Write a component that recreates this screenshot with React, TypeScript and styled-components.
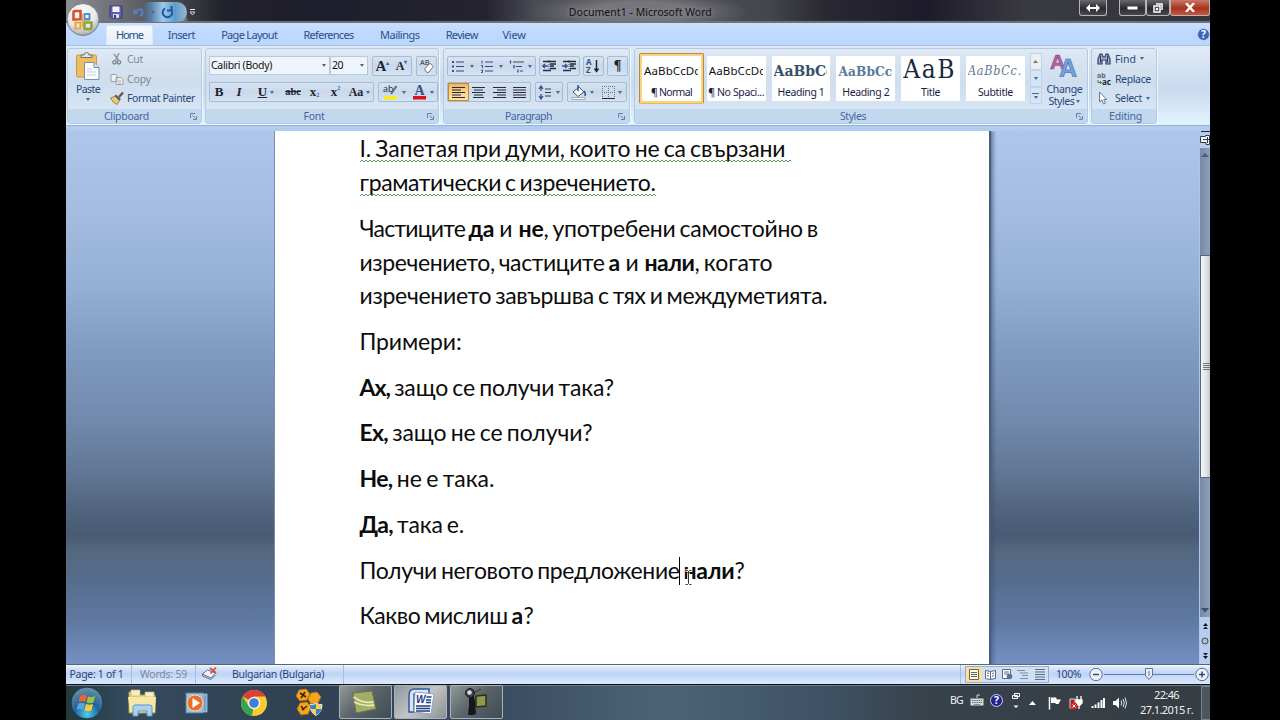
import React, { useLayoutEffect, useRef } from 'react';
import styled, { createGlobalStyle, css } from 'styled-components';

const GlobalStyle = createGlobalStyle`
  * {
    box-sizing: border-box;
  }
  body {
    margin: 0;
    background: #000;
    overflow: hidden;
  }
  svg {
    display: block;
    flex: none;
  }
`;

const uiFont = '"Noto Sans", "Open Sans", sans-serif';
const docFont = 'Lato, "Open Sans", sans-serif';
const serifFont = '"Liberation Serif", serif';
const headFont = '"DejaVu Serif Condensed", "DejaVu Serif", serif';

/* Text that is tracked so that it fills exactly the given width. */
const FitSpan = styled.span<{ bold?: boolean }>`
  display: inline-block;
  white-space: pre;
  ${(p) => p.bold && 'font-weight: bold;'}
`;

type FitProps = { w: number; bold?: boolean; children: React.ReactNode };

const Fit = ({ w, bold, children }: FitProps) => {
  const ref = useRef<HTMLSpanElement>(null);

  useLayoutEffect(() => {
    const el = ref.current;
    if (!el) return;
    el.style.letterSpacing = '0px';
    const natural = el.getBoundingClientRect().width;
    const count = (el.textContent || '').length;
    el.style.letterSpacing = `${(w - natural) / count}px`;
  }, [w]);

  return (
    <FitSpan ref={ref} bold={bold}>
      {children}
    </FitSpan>
  );
};

const Screen = styled.div`
  width: 1280px;
  height: 720px;
  padding: 0 70px 0 66px;
  background: #000;
  overflow: hidden;
`;

const Desktop = styled.div`
  display: flex;
  flex-direction: column;
  width: 1144px;
  height: 720px;
  font-family: ${uiFont};
  font-size: 10.5px;
  color: #26477f;
`;

/* ---------- title bar ---------- */

const TitleBar = styled.div`
  position: relative;
  display: flex;
  flex: none;
  height: 23px;
  background:
    radial-gradient(ellipse 20px 12px at 103px 20px, #e4e4e4 0 45%, transparent 100%),
    radial-gradient(ellipse 110px 22px at 574px 12px, #75757b 0 45%, transparent 100%),
    linear-gradient(90deg, #8d8f93 0, #6a6c72 55px, #45474e 110px, #22222b 155px, #1e1d2b 240px, #24232f 420px, #4b4c54 470px, #45464e 700px, #292831 760px, #1d1b29 860px, #3a3a42 960px, #33333d 1144px);
  box-shadow: inset 0 -2px 1px #70747a;
`;

const OfficeButton = styled.div`
  position: absolute;
  left: 0;
  top: 2px;
  z-index: 2;
`;

const QuickAccess = styled.div`
  display: flex;
  align-items: center;
  width: 134px;
  height: 23px;
  padding: 1px 0 0 43px;
`;

const UndoPill = styled.div`
  display: flex;
  align-items: center;
  gap: 6px;
  width: 58px;
  height: 20px;
  margin-left: 6px;
  padding-left: 4px;
  border-radius: 4px 10px 10px 4px;
  background: linear-gradient(90deg, transparent 14px, #587fa8 22px, #9cc9e8 34px, #5b9dca 46px, #9db8cc);
`;

const DocTitle = styled.div`
  width: 880px;
  padding-left: 369px;
  line-height: 25px;
  color: #101014;
  text-shadow: 0 0 4px #999;
`;

const WindowButtons = styled.div`
  display: flex;
  height: 17px;
`;

const WinButton = styled.div<{ w: number; red?: boolean; gap?: number }>`
  display: flex;
  flex: none;
  align-items: center;
  justify-content: center;
  width: ${(p) => p.w}px;
  height: 16px;
  margin-left: ${(p) => p.gap || 0}px;
  border: 1px solid #b5b5b8;
  border-top: 0;
  border-radius: 0 0 3px 3px;
  background: ${(p) =>
    p.red
      ? 'linear-gradient(#c9786b, #a6331f 55%, #c9563c)'
      : 'linear-gradient(#66676c, #2b2b31 55%, #47474d)'};
`;

/* ---------- ribbon ---------- */

const TabRow = styled.div`
  display: flex;
  flex: none;
  height: 22px;
  padding-left: 40px;
  background: linear-gradient(#c9dfff, #bfd9ff 40%, #bcd6fd);
`;

const Tab = styled.div<{ w: number; active?: boolean }>`
  width: ${(p) => p.w}px;
  height: 23px;
  margin-top: 2px;
  line-height: 20px;
  text-align: center;
  font-size: 11px;
  color: #2a4f87;
  ${(p) =>
    p.active &&
    css`
      border: 1px solid #d9e9fb;
      border-bottom: 0;
      border-radius: 3px 3px 0 0;
      line-height: 18px;
      background: linear-gradient(#f4f9ff, #e1edf9);
    `}
`;

const HelpSlot = styled.div`
  margin: 5px 0 0 661px;
`;

const Ribbon = styled.div`
  display: flex;
  flex: none;
  height: 81px;
  padding: 2px 0 0 1px;
  border-top: 1px solid #a5c4ea;
  border-bottom: 1px solid #8fb2d6;
  background: linear-gradient(#e1ebf6, #d3e1f1 30%, #c9daee 55%, #dbebfa 85%, #dff5fc);
`;

const RibbonFoot = styled.div`
  flex: none;
  height: 5px;
  background: #b2cbee;
`;

const Group = styled.div<{ w: number; gap?: number }>`
  display: flex;
  flex-direction: column;
  flex: none;
  width: ${(p) => p.w}px;
  height: 76px;
  margin-right: ${(p) => p.gap || 3}px;
  border: 1px solid #b3cae3;
  border-radius: 3px;
  background: linear-gradient(#e0e9f4, #d5e2f0 22%, #cfdeee 45%, #dae8f6);
  box-shadow: 1px 1px 0 #f0f7fd;
`;

const GroupBody = styled.div`
  display: flex;
  height: 60px;
`;

const GroupLabel = styled.div<{ plain?: boolean }>`
  display: flex;
  align-items: center;
  height: 14px;
  padding: ${(p) => (p.plain ? '0' : '0 4px 0 0')};
  background: #c2d8ef;
  color: #4565a0;

  > span {
    flex: 1;
    padding: ${(p) => (p.plain ? '0 0 0 3px' : '0 5px 0 0')};
    text-align: center;
  }
`;

const PasteButton = styled.div`
  display: flex;
  flex-direction: column;
  align-items: center;
  width: 40px;
  padding-top: 3px;
`;

const PasteText = styled.div`
  height: 18px;
  line-height: 19px;
`;

const CommandList = styled.div<{ w: number }>`
  display: flex;
  flex-direction: column;
  width: ${(p) => p.w}px;
`;

const Command = styled.div<{ off?: boolean; iconWidth: number }>`
  display: grid;
  grid-template-columns: ${(p) => p.iconWidth}px auto auto;
  justify-content: start;
  align-items: center;
  column-gap: 4px;
  height: 19.7px;
  line-height: 14px;
  color: ${(p) => (p.off ? '#808892' : '#26477f')};
`;

const Rows = styled.div`
  display: flex;
  flex-direction: column;
  gap: 6px;
  padding: 7px 0 0 3px;
`;

const ToolRow = styled.div<{ gap?: number }>`
  display: flex;
  gap: ${(p) => p.gap || 4}px;
  height: 20px;
`;

const ComboPair = styled.div`
  display: flex;
`;

const Combo = styled.div<{ w: number }>`
  display: flex;
  align-items: center;
  justify-content: space-between;
  width: ${(p) => p.w}px;
  height: 19px;
  padding: 0 3px 1px 1px;
  border: 1px solid #b4c9e2;
  background: #eef4fb;
  color: #111;
`;

const ToolGroup = styled.div<{ w: number }>`
  display: flex;
  align-items: center;
  width: ${(p) => p.w}px;
  height: 20px;
  border: 1px solid #a5bcd8;
  border-radius: 2px;
  background: linear-gradient(#d7e3f1, #c9d8eb 50%, #d5e3f3);
`;

const Tool = styled.div<{ w: number; on?: boolean }>`
  display: flex;
  align-items: center;
  justify-content: center;
  gap: 3px;
  width: ${(p) => p.w}px;
  height: 18px;
  ${(p) =>
    p.on &&
    css`
      border: 1px solid #c28a30;
      background: linear-gradient(#f5b562, #fdd28a 50%, #ffe69a);
    `}
`;

const Glyph = styled.span<{ size?: number; italic?: boolean; line?: string }>`
  font-family: ${serifFont};
  font-weight: bold;
  font-size: ${(p) => p.size || 13}px;
  line-height: 14px;
  font-style: ${(p) => (p.italic ? 'italic' : 'normal')};
  text-decoration: ${(p) => p.line || 'none'};
  color: #1c2430;

  sub,
  sup {
    font-size: 6px;
    line-height: 0;
    color: #3a62a8;
  }
  sub {
    vertical-align: -1px;
  }
  sup {
    vertical-align: 6px;
  }
`;

const Caret = styled.i`
  width: 0;
  height: 0;
  border: 2.5px solid transparent;
  border-top: 3px solid #4a678f;
  border-bottom: 0;
`;

const StyleList = styled.div`
  display: flex;
  padding: 4px 0 0 4px;
`;

const StyleTile = styled.div<{ active?: boolean }>`
  display: flex;
  flex-direction: column;
  width: 64.8px;
  height: 51px;
  border: 3px solid transparent;
  background: #fff padding-box;
  ${(p) =>
    p.active &&
    css`
      border: 1px solid #b38a44;
      border-bottom-color: #e3b860;
      border-radius: 2px;
      box-shadow: inset 0 0 0 2px #fbd37c;
      padding: 2px;
    `}
`;

const Sample = styled.div<{ look: string }>`
  height: 31px;
  margin: 0 3px 0 2px;
  overflow: hidden;
  white-space: nowrap;
  font-size: 11.5px;
  line-height: 30px;
  color: #111;
  ${(p) =>
    p.look === 'heading' &&
    css`
      font: bold 15.5px/30px ${headFont};
      color: #365067;
    `}
  ${(p) =>
    p.look === 'heading2' &&
    css`
      font: bold 13.5px/30px ${headFont};
      color: #58799a;
    `}
  ${(p) =>
    p.look === 'title' &&
    css`
      font: 26px/26px ${headFont};
      color: #17293e;
    `}
  ${(p) =>
    p.look === 'subtitle' &&
    css`
      font: italic 12.5px/30px ${headFont};
      color: #60798f;
    `}
`;

const StyleName = styled.div`
  height: 15px;
  line-height: 15px;
  margin-top: -2px;
  text-align: center;
  color: #1c1c4a;
`;

const GalleryScroll = styled.div`
  display: flex;
  flex-direction: column;
  margin-left: 2px;
`;

const ScrollStep = styled.div`
  display: flex;
  flex-direction: column;
  align-items: center;
  justify-content: center;
  gap: 2px;
  width: 12px;
  height: 17px;
  border: 1px solid #bfd2ea;
  background: #d5e4f6;

  &:first-child {
    background: #eceeef;
  }
`;

const ChangeStyles = styled.div`
  width: 46px;
  padding-top: 3px;
  text-align: center;
  line-height: 11.5px;

  svg {
    margin: 0 auto 7px;
  }
  i {
    display: inline-block;
    margin: 0 0 2px 2px;
  }
`;

/* ---------- document ---------- */

const Workspace = styled.div`
  display: flex;
  flex: none;
  height: 533px;
  padding-left: 209px;
  background: linear-gradient(
    #aec6e9 0,
    #a2bbde 90px,
    #95b1d6 150px,
    #7f9abf 225px,
    #7189ab 290px,
    #5f7592 346px,
    #52667f 375px,
    #495b74 404px,
    #53677f 420px,
    #566e8e 452px,
    #6079a1 490px,
    #7490c4 533px
  );
`;

const Page = styled.div`
  width: 714px;
  height: 533px;
  padding: 1.3px 0 0 84.5px;
  background: #fff;
  box-shadow: -1px 0 0 #7a8daa, 2px 0 1px #4a5d7c, 5px 0 3px rgba(60, 80, 115, 0.45);
  clip-path: inset(0 -8px 0 -2px);
  font-family: ${docFont};
  font-size: 23px;
  word-spacing: -1.6px;
  color: #0c0c0c;
`;

const Paragraph = styled.div`
  margin-bottom: 11.9px;
`;

const Line = styled.div`
  position: relative;
  display: flex;
  height: 33.8px;
  line-height: 33.8px;
  white-space: nowrap;
`;

const SquiggleSvg = styled.svg`
  position: absolute;
  left: 0;
  top: 27px;
`;

const TextCaret = styled.div`
  position: absolute;
  left: 319px;
  top: 3px;
  width: 1px;
  height: 28px;
  background: #000;
`;

const IBeam = styled.svg`
  position: absolute;
  left: 324px;
  top: 15px;
`;

const ScrollBar = styled.div`
  display: flex;
  flex-direction: column;
  align-items: center;
  width: 11px;
  margin-left: 210px;
  border-left: 1px solid #a9c6f4;
  background: #b7cdee;
`;

const ScrollTrack = styled.div<{ h: number }>`
  display: flex;
  flex-direction: column;
  align-items: center;
  justify-content: space-between;
  width: 10px;
  height: ${(p) => p.h}px;
  background: linear-gradient(90deg, #7788a2, #8c9fbd);
`;

const ScrollThumb = styled.div`
  display: flex;
  align-items: center;
  justify-content: flex-end;
  width: 10px;
  height: 223px;
  border: 1px solid #56657a;
  border-right: 0;
  background: linear-gradient(90deg, #f5f7f8, #dfe3e6 60%, #c3c9cf);
`;

const BrowseButtons = styled.div`
  display: flex;
  flex-direction: column;
  align-items: center;
  gap: 8px;
  padding-top: 6px;
`;

/* ---------- status bar ---------- */

const StatusBar = styled.div`
  display: flex;
  align-items: center;
  flex: none;
  height: 20px;
  border-top: 1px solid #567;
  background: linear-gradient(#f4f8fd 0, #d6e5fa 3px, #bdd3f5 9px, #cfe0f9 14px, #dceafd 20px);
  color: #2b4478;
`;

const StatusCell = styled.div<{ w: number; pad: number; dim?: boolean }>`
  display: flex;
  align-items: center;
  width: ${(p) => p.w}px;
  height: 19px;
  padding: 0 0 2px ${(p) => p.pad}px;
  border-right: 1px solid #a4bde0;
  color: ${(p) => (p.dim ? '#7c889c' : '#2b4478')};
`;

const ViewButtons = styled.div`
  display: flex;
  width: 84px;
  height: 17px;
  margin: 0 7px 0 4px;
  border: 1px solid #93acd0;
  background: #cfdff4;
`;

const ViewButton = styled.div<{ on?: boolean }>`
  display: flex;
  align-items: center;
  justify-content: center;
  width: 16.4px;
  background: ${(p) => (p.on ? '#fbdf9a' : 'none')};
`;

const ZoomRow = styled.div`
  display: flex;
  align-items: center;
  height: 19px;
  padding-bottom: 2px;
`;

/* ---------- task bar ---------- */

const TaskBar = styled.div`
  display: flex;
  flex: none;
  height: 36px;
  border-top: 1px solid #0c1116;
  box-shadow: inset 0 1px 0 #6d7c88;
  background: linear-gradient(90deg, #233a3a 0, #344a5e 60px, #2f4152 240px, #3a4e61 440px, #4c6377 600px, #3d5264 760px, #38424b 860px, #363d43 1144px);
`;

const LaunchSlot = styled.div<{ w: number }>`
  display: flex;
  align-items: center;
  justify-content: center;
  width: ${(p) => p.w}px;
  height: 35px;
`;

const TaskButton = styled.div<{ active?: boolean }>`
  display: flex;
  align-items: center;
  justify-content: center;
  width: 53px;
  height: 34px;
  margin: 0 2.5px 0 0;
  border: 1px solid #a9b2b8;
  border-radius: 2px;
  background: ${(p) =>
    p.active
      ? 'linear-gradient(135deg, #8f979b, #c3c5c5 50%, #8d8f90)'
      : 'linear-gradient(135deg, #929999, #5b656b 45%, #414c54)'};
`;

const Tray = styled.div`
  display: flex;
  align-items: center;
  margin-left: 445px;
  color: #f0f3f5;
`;

const Slot = styled.div<{ w: number; lift?: number }>`
  display: flex;
  align-items: center;
  width: ${(p) => p.w}px;
  padding-bottom: ${(p) => p.lift || 0}px;
`;

const Clock = styled.div`
  width: 67px;
  text-align: center;
  font-size: 11px;
  line-height: 15px;
  padding: 0 2px 1px 0;
`;

const ShowDesktop = styled.div`
  width: 9px;
  height: 34px;
  border: 1px solid #79838a;
  border-right: 0;
  background: #4d565d;
`;

/* ---------- drawings ---------- */

const OfficeLogo = () => (
  <svg width="36" height="36" viewBox="0 0 36 36">
    <defs>
      <radialGradient id="orb" cx="45%" cy="30%" r="75%">
        <stop offset="0" stopColor="#fff" />
        <stop offset=".6" stopColor="#e6e8ec" />
        <stop offset="1" stopColor="#989ca5" />
      </radialGradient>
    </defs>
    <circle cx="17" cy="17.5" r="16" fill="url(#orb)" stroke="#777c85" />
    <g fill="none" strokeWidth="2.6">
      <path d="M14.500 9H9q-1.500 0-1.500 1.500v7h7z" stroke="#d9502b" />
      <path d="M18.500 12h5v5h-5z" stroke="#4f93cf" strokeWidth="2" />
      <path d="M9.500 20.500h5v6h-5z" stroke="#e9a73b" strokeWidth="2.200" />
      <path d="M18.500 20.500h7v5q0 1.500-1.500 1.500h-5.500z" stroke="#8aa83a" />
    </g>
    <path d="M16.500 12v13M11 18.500h13" stroke="#e8b04c" strokeWidth="1" />
  </svg>
);

const SaveIcon = () => (
  <svg width="14" height="14" viewBox="0 0 14 14">
    <path d="M1 1h12v12H2.500L1 11.500z" fill="#5f60b4" stroke="#35357f" />
    <path d="M3.500 1.500h7v5.500h-7z" fill="#f3f5fb" />
    <path d="M4 9h6v4H4z" fill="#d4d8ea" />
    <path d="M5 10h2v3H5z" fill="#383888" />
  </svg>
);

const UndoIcon = () => (
  <svg width="12" height="12" viewBox="0 0 12 12">
    <path d="M2.500 6Q7 1.500 9 4.500q1.500 3-1.500 6" fill="none" stroke="#5d7fc4" strokeWidth="2" />
    <path d="M.5 2v6h5z" fill="#5d7fc4" />
  </svg>
);

const RedoIcon = () => (
  <svg width="13" height="13" viewBox="0 0 13 13">
    <path d="M4 2.300a4.800 4.800 0 1 0 5.500.4M10.500 0v4.500H6" fill="none" stroke="#2355a8" strokeWidth="2" />
  </svg>
);

const MoreIcon = () => (
  <svg width="7" height="7" viewBox="0 0 7 7">
    <path d="M1 .5h5" stroke="#e5e5e8" />
    <path d="M1 3h5L3.500 6z" fill="none" stroke="#e5e5e8" strokeWidth=".9" />
  </svg>
);

const HelpIcon = ({ dark }: { dark?: boolean }) => (
  <svg width="13" height="13" viewBox="0 0 13 13">
    <circle cx="6.500" cy="6.500" r="6" fill={dark ? '#23238f' : '#3c66b8'} stroke="#c4d0ec" />
    <text x="6.500" y="10.300" fontSize="10.500" fontWeight="bold" fontFamily="Open Sans" textAnchor="middle" fill="#fff">
      ?
    </text>
  </svg>
);

const ClipboardIcon = () => (
  <svg width="26" height="28" viewBox="0 0 26 28">
    <rect x="1.500" y="3" width="20" height="22" rx="1.500" fill="#edbd60" stroke="#c9994a" />
    <path d="M6 5.500h11V3h-3q0-2.500-2.500-2.500T9 3H6z" fill="#dfe1e3" stroke="#6d7278" />
    <path d="M9.500 10.500h9.500l5 5v12H9.500z" fill="#fafcff" stroke="#7b8fae" />
    <path d="M19 10.500v5h5" fill="#d5e0ef" stroke="#7b8fae" />
    <path d="M12 17h5M12 20h9M12 23h9" stroke="#c3cddd" />
  </svg>
);

const CutIcon = () => (
  <svg width="13" height="12" viewBox="0 0 13 12">
    <path d="M9 0L5.500 7.500M4 1l4.500 6.500" stroke="#8c939b" strokeWidth="1.400" />
    <circle cx="4.500" cy="9.300" r="1.700" fill="none" stroke="#7c838b" strokeWidth="1.300" />
    <circle cx="9" cy="9.300" r="1.700" fill="none" stroke="#7c838b" strokeWidth="1.300" />
  </svg>
);

const CopyIcon = () => (
  <svg width="14" height="12" viewBox="0 0 14 12">
    <path d="M1 1.500h5l1 1v6H1zM6 4.500h5l2 2v5H6z" fill="#eef0f2" stroke="#9aa1a9" />
    <path d="M8 8h3M8 10h3" stroke="#a9b0b8" />
  </svg>
);

const PainterIcon = () => (
  <svg width="14" height="13" viewBox="0 0 14 13">
    <path d="M13 .5L9 5" stroke="#6c5030" strokeWidth="2.200" />
    <path d="M.5 6l5-2 4.500 4-3 4.500q-3.500-1-6.500-6.500z" fill="#ecca78" stroke="#8f6f2c" strokeWidth=".8" />
    <path d="M6 2.500l5 4.500-2 1.500L4.500 4z" fill="#54606f" />
  </svg>
);

const Launcher = () => (
  <svg width="7" height="7" viewBox="0 0 7 7">
    <path d="M.5 5V.5H5" fill="none" stroke="#6782a8" />
    <path d="M2.500 2.500l3 3M6.500 3v3.500H3" fill="none" stroke="#6782a8" />
  </svg>
);

const ClearIcon = () => (
  <svg width="18" height="16" viewBox="0 0 18 16">
    <text x="3" y="7" fontSize="7.500" fontFamily="Open Sans" fill="#223">
      AB
    </text>
    <path d="M8 10.500l4-4.500q1-1 2 0l1.500 1.500q1 1 0 2L12 14q-1 1-2 .3l-2-1.800z" fill="#fff" stroke="#6a7485" />
  </svg>
);

const HighlightIcon = () => (
  <svg width="17" height="16" viewBox="0 0 17 16">
    <text x="1" y="8" fontSize="9" fontFamily="Open Sans" fill="#223">
      ab
    </text>
    <path d="M14.500 2L9 10" stroke="#5b6a80" strokeWidth="2" />
    <rect x="2" y="12" width="13" height="3.500" fill="#f4ee1b" />
  </svg>
);

const FontColorIcon = () => (
  <svg width="15" height="16" viewBox="0 0 15 16">
    <text x="7.500" y="10.500" fontSize="14" fontWeight="bold" fontFamily="Liberation Serif" textAnchor="middle" fill="#35507e">
      A
    </text>
    <rect x="1" y="12" width="13" height="3.500" fill="#df1111" />
  </svg>
);

const ListIcon = ({ kind }: { kind: 'dot' | 'num' | 'multi' }) => (
  <svg width="16" height="13" viewBox="0 0 16 13">
    {kind === 'multi' ? (
      <path d="M4 2h11M7 6.500h6M11 11h3" stroke="#3b4a60" />
    ) : (
      <path d="M5 2h8M5 6.500h8M5 11h8" stroke="#3b4a60" />
    )}
    {kind === 'dot' && <path d="M1 1h2v2H1zM1 5.500h2v2H1zM1 10h2v2H1z" fill="#31528f" />}
    {kind === 'num' && <path d="M2 .5v3M1 5.500h1.500V8M1 10h1.500v2.500H1" fill="none" stroke="#31528f" />}
    {kind === 'multi' && <path d="M1.500 .5v3M5 5v3.500M9 9.500v3" stroke="#31528f" strokeWidth="1.300" />}
  </svg>
);

const IndentIcon = ({ flip }: { flip?: boolean }) => (
  <svg width="15" height="12" viewBox="0 0 15 12">
    <path d="M1 1.500h13M8 4h6M8 6h4M8 8.500h6M1 10.500h8" stroke="#222c3c" strokeWidth="1.300" />
    <path d={flip ? 'M0 6h5M3 4l2.200 2L3 8' : 'M6 6H1M3 4L.8 6 3 8'} fill="none" stroke="#31528f" strokeWidth="1.300" />
    <path d="M7 0v12" stroke="#445" strokeDasharray="1 1" />
  </svg>
);

const SortIcon = () => (
  <svg width="18" height="16" viewBox="0 0 18 16">
    <g fontFamily="Open Sans" fontWeight="bold" fontSize="8">
      <text x="2" y="7" fill="#31528f">
        A
      </text>
      <text x="2" y="15" fill="#4a4a5a">
        Z
      </text>
    </g>
    <path d="M12.500 2v11M10.500 10.500l2 3 2-3" fill="none" stroke="#222" strokeWidth="1.400" />
  </svg>
);

const alignPaths: Record<string, string> = {
  left: 'M0 .5h13M0 3h9M0 5.500h13M0 8h9M0 10.500h13',
  center: 'M0 .5h13M2 3h9M0 5.500h13M2 8h9M1 10.500h11',
  right: 'M0 .5h13M4 3h9M0 5.500h13M4 8h9M0 10.500h13',
  justify: 'M0 .5h13M0 3h13M0 5.500h13M0 8h13M0 10.500h13',
};

const AlignIcon = ({ kind }: { kind: string }) => (
  <svg width="13" height="11" viewBox="0 0 13 11">
    <path d={alignPaths[kind]} stroke="#252b3a" strokeWidth="1.200" />
  </svg>
);

const SpacingIcon = () => (
  <svg width="15" height="15" viewBox="0 0 15 15">
    <path d="M3 1v5M3 9v5M1 4l2-3 2 3M1 11l2 3 2-3" fill="none" stroke="#31528f" strokeWidth="1.300" />
    <path d="M7 4h6M7 7.500h6M7 11h6" stroke="#333d50" strokeWidth="1.200" />
  </svg>
);

const BucketIcon = () => (
  <svg width="16" height="15" viewBox="0 0 16 15">
    <path d="M2 7l6-5 5 5-6 4.500z" fill="#f2f4f8" stroke="#4d5a70" />
    <path d="M7 0v6M13 6q2 2 1 5" fill="none" stroke="#31528f" strokeWidth="1.500" />
    <path d="M1 12.500h13v2H1z" fill="#fff" stroke="#8b95a8" strokeWidth=".8" />
  </svg>
);

const BorderIcon = () => (
  <svg width="13" height="13" viewBox="0 0 13 13">
    <path d="M.5 0v12M6.500 0v12M12.500 0v12M0 .5h13M0 6.500h13" stroke="#66758f" strokeDasharray="1 1" />
    <path d="M0 12.500h13" stroke="#223" />
  </svg>
);

const ChangeStylesIcon = () => (
  <svg width="28" height="25" viewBox="0 0 28 25">
    <g fontFamily="Liberation Sans" fontWeight="bold">
      <text x="0" y="17" fontSize="21" fill="#b565a8" stroke="#7d3a7e" strokeWidth=".6">
        A
      </text>
      <text x="9" y="24.500" fontSize="25" fill="#76a2dc" stroke="#3d69aa" strokeWidth=".6">
        A
      </text>
    </g>
  </svg>
);

const FindIcon = () => (
  <svg width="14" height="12" viewBox="0 0 14 12">
    <path d="M1 11V6l2-5h2l1 3h2l1-3h2l2 5v5H9V7H5v4z" fill="#9eb0ce" stroke="#2d3e66" strokeWidth="1.200" />
    <path d="M3.500 2.500v7M10.500 2.500v7" stroke="#2d3e66" />
  </svg>
);

const ReplaceIcon = () => (
  <svg width="15" height="14" viewBox="0 0 15 14">
    <g fontFamily="Open Sans" fontWeight="bold">
      <text x="0" y="6" fontSize="7" fill="#666">
        ab
      </text>
      <text x="5" y="13" fontSize="8" fill="#223">
        ac
      </text>
    </g>
    <path d="M1 8v2.500h3M3 9l1.500 1.500L3 12" fill="none" stroke="#4a7a4a" />
  </svg>
);

const PointerIcon = () => (
  <svg width="11" height="14" viewBox="0 0 11 14">
    <path d="M2.500 1v10l2.500-2 1.500 4 2-1-1.800-3.500h3z" fill="#fff" stroke="#6a7890" />
  </svg>
);

const Squiggle = ({ w }: { w: number }) => (
  <SquiggleSvg width={w} height="4" viewBox={`0 0 ${w} 4`}>
    <defs>
      <pattern id={`wave${w}`} width="4" height="4" patternUnits="userSpaceOnUse">
        <path d="M0 3L2 1 4 3" fill="none" stroke="#3f8a4a" strokeWidth=".9" />
      </pattern>
    </defs>
    <rect width={w} height="4" fill={`url(#wave${w})`} />
  </SquiggleSvg>
);

const SplitIcon = () => (
  <svg width="10" height="17" viewBox="0 0 10 17">
    <path d="M1 0h9" stroke="#1d2a44" strokeWidth="2" />
    <path d="M.5 5.500h5v-1h4v9H6v-2H.5z" fill="#f3f6fb" stroke="#333d4e" />
    <path d="M3 8.500h6M7.500 6v6" stroke="#333d4e" />
  </svg>
);

const DoubleArrow = ({ down }: { down?: boolean }) => (
  <svg width="5" height="6" viewBox="0 0 5 6">
    <path d={down ? 'M0 0h5L2.500 2.500zM0 3h5L2.500 6z' : 'M2.500 0L5 3H0zM2.500 3.500L5 6H0z'} fill="#111" />
  </svg>
);

const ProofIcon = () => (
  <svg width="15" height="13" viewBox="0 0 15 13">
    <path d="M.5 7l5-4 8 3-4.500 5z" fill="#f4f6fb" stroke="#62718c" />
    <path d="M.5 7v2L9 12.500l4.500-4.500" fill="none" stroke="#62718c" />
    <path d="M8 1l6 5M14 .5L8.500 6.500" stroke="#d8503e" strokeWidth="1.800" />
  </svg>
);

const ViewIcon = ({ kind }: { kind: number }) => (
  <svg width="12" height="11" viewBox="0 0 12 11">
    {kind === 0 && <path d="M1.500.5h9v10h-9zM3 3.500h6M3 5.500h6M3 7.500h6" fill="#fff" stroke="#6b6247" />}
    {kind === 1 && <path d="M.5 1.500l5 1 5-1v8l-5 1-5-1zM5.500 2.500v8M2 4l2 .5M2 6.500l2 .5M7 4.500L9 4M7 7l2-.5" fill="#fff" stroke="#596883" />}
    {kind === 2 && (
      <>
        <path d="M1.500.5h8v9h-8zM3 3h5M3 5h5" fill="#fff" stroke="#596883" />
        <circle cx="8.500" cy="7.500" r="2.800" fill="#5c7193" />
      </>
    )}
    {kind === 3 && <path d="M0 1.500h8M3 4h8M5 6.500h6M3 9.500h8" stroke="#7d8ba5" />}
    {kind === 4 && <path d="M1 .5h10M1 3h10M1 5.500h10M1 8h10M1 10.500h10" stroke="#596883" />}
  </svg>
);

const ZoomSlider = () => (
  <svg width="122" height="16" viewBox="0 0 122 16">
    <g fill="#eef4fc" stroke="#5b6f91">
      <circle cx="8" cy="8.500" r="6.200" />
      <circle cx="114" cy="8.500" r="6.200" />
    </g>
    <path d="M5 8.500h6M111 8.500h6M114 5.500v6" stroke="#34476b" strokeWidth="1.500" />
    <path d="M16 8.500h90" stroke="#647ba3" />
    <path d="M57.500 2.500h7v7l-3.500 4-3.500-4z" fill="#e6edf7" stroke="#5d7296" />
    <path d="M61 5v5" stroke="#5d7296" />
  </svg>
);

const StartOrb = () => (
  <svg width="34" height="34" viewBox="0 0 34 34">
    <defs>
      <radialGradient id="start" cx="50%" cy="85%" r="85%">
        <stop offset="0" stopColor="#4fd0ee" />
        <stop offset=".45" stopColor="#20639a" />
        <stop offset="1" stopColor="#6e93a9" />
      </radialGradient>
    </defs>
    <circle cx="17" cy="17" r="16" fill="url(#start)" stroke="#1e3547" />
    <path d="M10 10q3.500-2 7 0l-1.500 6q-3.500-1.500-7 0z" fill="#e8652c" />
    <path d="M18 10.500q3.500 1.500 7-.5l-1.500 6.500q-3.500 1.500-7 0z" fill="#9cc63c" />
    <path d="M8 17.500q3.500-1.500 7 0L13.500 24q-3.500-2-7 0z" fill="#56a5e0" />
    <path d="M16 18q3.500 1.500 7 0l-1.500 6.500q-3.500 1.500-7 0z" fill="#f6cb3a" />
  </svg>
);

const ExplorerIcon = () => (
  <svg width="31" height="28" viewBox="0 0 31 28">
    <path d="M2 3h9l2 3h15v18H2z" fill="#e9d58b" stroke="#b99c4d" />
    <path d="M4 1h9v6H4zM18 3h9v5h-9z" fill="#f7efc4" stroke="#c9b26a" strokeWidth=".7" />
    <path d="M1 8h28l-1 15H3z" fill="#f5e7a8" />
    <path d="M6 27v-9q0-2 2-2h15q2 0 2 2v9h-5v-5h-9v5z" fill="#a9d3ef" stroke="#5e96c0" />
  </svg>
);

const MediaIcon = () => (
  <svg width="24" height="24" viewBox="0 0 24 24">
    <path d="M1 2h17v20H1z" fill="#9fc3dd" stroke="#587b96" />
    <path d="M18 3h4v18h-4z" fill="#6fa4ce" stroke="#bcd6e8" strokeWidth=".7" />
    <circle cx="10" cy="12" r="8" fill="#e9702a" stroke="#f7d5bd" />
    <path d="M7.500 7l7.500 5-7.500 5z" fill="#fff" />
  </svg>
);

const ChromeIcon = () => (
  <svg width="28" height="28" viewBox="0 0 28 28">
    <circle cx="14" cy="14" r="13" fill="#f7cc33" />
    <path d="M14 14L2.700 7.500A13 13 0 0 1 25.300 7.500H14z" fill="#dd4033" />
    <path d="M14 14l-2 12.900A13 13 0 0 1 2.700 7.500L8.500 17z" fill="#35a352" />
    <path d="M8.500 17l4 3.500L11 26.500 4 20z" fill="#35a352" />
    <circle cx="14" cy="14" r="6.200" fill="#f3f3f3" />
    <circle cx="14" cy="14" r="4.800" fill="#3f7fd8" />
  </svg>
);

const HoneycombIcon = () => (
  <svg width="29" height="29" viewBox="0 0 29 29">
    <g fill="#f4a51d" stroke="#b7700d" strokeWidth=".8">
      <path d="M4 2l7-1 4 5-3 6-7 1-4-5z" />
      <path d="M16 5l6-1 4 5-3 6-7 1-3-5z" />
      <path d="M5 15l7-1 4 5-3 7-7 1-4-6z" />
    </g>
    <path d="M5 5l6 4M10 4L6 10M7 22l5-4M6 18l3 4" stroke="#3a2608" strokeWidth="1.600" />
    <path d="M21 15q3 2 6 1.500 0 8-6 11-6-3-6-11 3 .5 6-1.500z" fill="#f5d443" stroke="#d7e3ee" />
    <path d="M21 16v5h-5.500q-.5-2-.5-4 4 .5 6-1zM21 21h5.500q-1 4-5.500 6z" fill="#3f7fc6" />
  </svg>
);

const CamtasiaIcon = () => (
  <svg width="28" height="26" viewBox="0 0 28 26">
    <path d="M2 4l19-2 4 18-20 4z" fill="#a3ad68" stroke="#6b7542" />
    <path d="M2.500 8q10 7 20 5M3 13q10 5 20 3" fill="none" stroke="#e5ebb9" strokeWidth="1.800" />
  </svg>
);

const WordIcon = () => (
  <svg width="29" height="28" viewBox="0 0 29 28">
    <path d="M3 24V7q0-6 6-6h14v5H8v18z" fill="#dbe6f5" stroke="#2c5a9e" strokeWidth="1.500" />
    <path d="M9 4l19 2-3 20-17-2z" fill="#fbfcfe" stroke="#8ea3c4" />
    <path d="M20.500 9h5M20 12h5M20 14.500h5M10 18h14.500M10 20.500h14M10 23h14" stroke="#213f7d" strokeWidth="1.500" />
    <text x="10" y="15" fontSize="10" fontWeight="bold" fontStyle="italic" fontFamily="Liberation Sans" fill="#1f3f86">
      W
    </text>
  </svg>
);

const CameraIcon = () => (
  <svg width="26" height="30" viewBox="0 0 26 30">
    <path d="M6 9h5l1 6 1 12-3 1H5l1-9z" fill="#15181a" />
    <circle cx="7" cy="6" r="4.500" fill="#3a3e40" stroke="#181a1b" />
    <circle cx="6.500" cy="5.500" r="2.300" fill="#d8dcdc" />
    <path d="M13 9l10-1v11l-10 1z" fill="#8e9a45" stroke="#2a2e1b" strokeWidth="1.500" />
    <path d="M12 5l6-3" stroke="#3f4635" strokeWidth="1.300" />
  </svg>
);

const KeyboardIcon = () => (
  <svg width="14" height="12" viewBox="0 0 14 12">
    <path d="M7 4V1h3" fill="none" stroke="#cfd4d8" />
    <rect x=".5" y="4.500" width="13" height="7" fill="#d7dbde" />
    <path d="M2 6.500h10M2 8.500h10M4 10.500h6" stroke="#666e75" strokeDasharray="1.500 .7" />
  </svg>
);

const RestoreTrayIcon = () => (
  <svg width="10" height="16" viewBox="0 0 10 16">
    <path d="M3.500.5h5v3h-5zM1.500 2.500h5v3h-5z" fill="#3a4148" stroke="#fff" />
    <path d="M2.500 12.500h5L5 15z" fill="#fff" />
  </svg>
);

const FlagIcon = () => (
  <svg width="14" height="14" viewBox="0 0 14 14">
    <path d="M1.500 1v12.500" stroke="#fff" strokeWidth="1.500" />
    <path d="M3 1.500h5l1 2h4l-2.500 4.500H8L7 7H3z" fill="#fff" />
  </svg>
);

const PowerIcon = () => (
  <svg width="14" height="15" viewBox="0 0 14 15">
    <path d="M1 4h5v9H1z" fill="#b51f21" stroke="#dadada" />
    <path d="M8 1v4M12 1v4M7 5h6v3l-2 2H9L7 8zM10 10v4" fill="#fff" stroke="#fff" strokeWidth="1.300" />
    <circle cx="5" cy="11" r="3.500" fill="#d42325" />
    <path d="M3.500 9.500l3 3M6.500 9.500l-3 3" stroke="#fff" />
  </svg>
);

const SignalIcon = () => (
  <svg width="14" height="12" viewBox="0 0 14 12">
    <path d="M1.500 11V9M4.500 11V7.500M7.500 11V5.500M10.500 11V3M13 11V1" stroke="#fff" strokeWidth="2" />
  </svg>
);

const SpeakerIcon = () => (
  <svg width="16" height="14" viewBox="0 0 16 14">
    <path d="M1 5h2.500L7 1.500v11L3.500 9H1z" fill="#fff" />
    <path d="M9 4.500q1.500 2.500 0 5M11 3q2.500 4 0 8M13 1.500q3 5.500 0 11" fill="none" stroke="#dfe3e6" />
  </svg>
);

/* ---------- sections ---------- */

const tabs = [
  { name: 'Home', w: 47, text: 27 },
  { name: 'Insert', w: 57, text: 27 },
  { name: 'Page Layout', w: 79, text: 56 },
  { name: 'References', w: 80, text: 50 },
  { name: 'Mailings', w: 63, text: 39.5 },
  { name: 'Review', w: 61, text: 32 },
  { name: 'View', w: 44, text: 23 },
];

const styleTiles = [
  { name: '¶ Normal', text: 41, sample: 'AaBbCcDc', look: 'plain', w: 56 },
  { name: '¶ No Spaci...', text: 56, sample: 'AaBbCcDc', look: 'plain', w: 56 },
  { name: 'Heading 1', text: 47, sample: 'AaBbCc', look: 'heading', w: 61 },
  { name: 'Heading 2', text: 47, sample: 'AaBbCc', look: 'heading2', w: 54 },
  { name: 'Title', text: 19, sample: 'AaB', look: 'title', w: 53 },
  { name: 'Subtitle', text: 35, sample: 'AaBbCc.', look: 'subtitle', w: 54 },
];

const Header = () => (
  <>
    <TitleBar>
      <OfficeButton>
        <OfficeLogo />
      </OfficeButton>
      <QuickAccess>
        <SaveIcon />
        <UndoPill>
          <UndoIcon />
          <Caret />
          <RedoIcon />
        </UndoPill>
        <Slot w={2} />
        <MoreIcon />
      </QuickAccess>
      <DocTitle>
        <Fit w={143}>Document1 - Microsoft Word</Fit>
      </DocTitle>
      <WindowButtons>
        <WinButton w={28}>
          <svg width="14" height="8" viewBox="0 0 14 8">
            <path d="M0 4l4-4v3h6V0l4 4-4 4V5H4v3z" fill="#fff" />
          </svg>
        </WinButton>
        <WinButton w={27} gap={12}>
          <svg width="11" height="4" viewBox="0 0 11 4">
            <path d="M.5.5h10v3H.5z" fill="#fff" />
          </svg>
        </WinButton>
        <WinButton w={24}>
          <svg width="10" height="10" viewBox="0 0 10 10">
            <path d="M3 1h6v6M1 3h6v6H1zM3.500 5.500h1v1h-1z" fill="none" stroke="#fff" strokeWidth="1.500" />
          </svg>
        </WinButton>
        <WinButton w={40} red>
          <svg width="10" height="9" viewBox="0 0 10 9">
            <path d="M1 0l8 9M9 0L1 9" stroke="#fff" strokeWidth="2.400" />
          </svg>
        </WinButton>
      </WindowButtons>
    </TitleBar>
    <TabRow>
      {tabs.map((tab, i) => (
        <Tab key={tab.name} w={tab.w} active={i === 0}>
          <Fit w={tab.text}>{tab.name}</Fit>
        </Tab>
      ))}
      <HelpSlot>
        <HelpIcon />
      </HelpSlot>
    </TabRow>
  </>
);

const ClipboardGroup = () => (
  <Group w={135}>
    <GroupBody>
      <PasteButton>
        <ClipboardIcon />
        <PasteText>
          <Fit w={24}>Paste</Fit>
        </PasteText>
        <Caret />
      </PasteButton>
      <Slot w={2} />
      <CommandList w={90}>
        <Command off iconWidth={13}>
          <CutIcon />
          <Fit w={16}>Cut</Fit>
        </Command>
        <Command off iconWidth={13}>
          <CopyIcon />
          <Fit w={24}>Copy</Fit>
        </Command>
        <Command iconWidth={13}>
          <PainterIcon />
          <Fit w={68}>Format Painter</Fit>
        </Command>
      </CommandList>
    </GroupBody>
    <GroupLabel>
      <span>
        <Fit w={45}>Clipboard</Fit>
      </span>
      <Launcher />
    </GroupLabel>
  </Group>
);

const FontGroup = () => (
  <Group w={234} gap={4}>
    <GroupBody>
      <Rows>
        <ToolRow>
          <ComboPair>
            <Combo w={121}>
              <Fit w={61}>Calibri (Body)</Fit>
              <Caret />
            </Combo>
            <Combo w={38}>
              <Fit w={11}>20</Fit>
              <Caret />
            </Combo>
          </ComboPair>
          <ToolGroup w={40}>
            <Tool w={19}>
              <Glyph size={15}>
                A<sup>▴</sup>
              </Glyph>
            </Tool>
            <Tool w={19}>
              <Glyph size={12}>
                A<sup>▾</sup>
              </Glyph>
            </Tool>
          </ToolGroup>
          <ToolGroup w={21}>
            <ClearIcon />
          </ToolGroup>
        </ToolRow>
        <ToolRow>
          <ToolGroup w={165}>
            <Tool w={18}>
              <Glyph>B</Glyph>
            </Tool>
            <Tool w={22}>
              <Glyph italic>I</Glyph>
            </Tool>
            <Tool w={32}>
              <Glyph line="underline">U</Glyph>
              <Caret />
            </Tool>
            <Tool w={22}>
              <Glyph size={10.5} line="line-through">
                abc
              </Glyph>
            </Tool>
            <Tool w={21}>
              <Glyph>
                x<sub>2</sub>
              </Glyph>
            </Tool>
            <Tool w={21}>
              <Glyph>
                x<sup>2</sup>
              </Glyph>
            </Tool>
            <Tool w={27}>
              <Glyph size={12}>Aa</Glyph>
              <Caret />
            </Tool>
          </ToolGroup>
          <ToolGroup w={60}>
            <Tool w={29}>
              <HighlightIcon />
              <Caret />
            </Tool>
            <Tool w={29}>
              <FontColorIcon />
              <Caret />
            </Tool>
          </ToolGroup>
        </ToolRow>
      </Rows>
    </GroupBody>
    <GroupLabel>
      <span>
        <Fit w={21}>Font</Fit>
      </span>
      <Launcher />
    </GroupLabel>
  </Group>
);

const ParagraphGroup = () => (
  <Group w={187} gap={4}>
    <GroupBody>
      <Rows>
        <ToolRow gap={3}>
          <ToolGroup w={89}>
            {(['dot', 'num', 'multi'] as const).map((kind) => (
              <Tool key={kind} w={29}>
                <ListIcon kind={kind} />
                <Caret />
              </Tool>
            ))}
          </ToolGroup>
          <ToolGroup w={41}>
            <Tool w={20}>
              <IndentIcon />
            </Tool>
            <Tool w={20}>
              <IndentIcon flip />
            </Tool>
          </ToolGroup>
          <ToolGroup w={21}>
            <SortIcon />
          </ToolGroup>
          <ToolGroup w={21}>
            <Tool w={19}>
              <Glyph size={14}>¶</Glyph>
            </Tool>
          </ToolGroup>
        </ToolRow>
        <ToolRow>
          <ToolGroup w={84}>
            {['left', 'center', 'right', 'justify'].map((kind) => (
              <Tool key={kind} w={20.7} on={kind === 'left'}>
                <AlignIcon kind={kind} />
              </Tool>
            ))}
          </ToolGroup>
          <ToolGroup w={28}>
            <Tool w={26}>
              <SpacingIcon />
              <Caret />
            </Tool>
          </ToolGroup>
          <ToolGroup w={60}>
            <Tool w={29}>
              <BucketIcon />
              <Caret />
            </Tool>
            <Tool w={29}>
              <BorderIcon />
              <Caret />
            </Tool>
          </ToolGroup>
        </ToolRow>
      </Rows>
    </GroupBody>
    <GroupLabel>
      <span>
        <Fit w={47}>Paragraph</Fit>
      </span>
      <Launcher />
    </GroupLabel>
  </Group>
);

const StylesGroup = () => (
  <Group w={454}>
    <GroupBody>
      <StyleList>
        {styleTiles.map((tile, i) => (
          <StyleTile key={tile.name} active={i === 0}>
            <Sample look={tile.look}>
              <Fit w={tile.w}>{tile.sample}</Fit>
            </Sample>
            <StyleName>
              <Fit w={tile.text}>{tile.name}</Fit>
            </StyleName>
          </StyleTile>
        ))}
        <GalleryScroll>
          <ScrollStep>
            <svg width="5" height="3">
              <path d="M0 3L2.500 0 5 3z" fill="#777" />
            </svg>
          </ScrollStep>
          <ScrollStep>
            <Caret />
          </ScrollStep>
          <ScrollStep>
            <svg width="7" height="1">
              <path d="M0 .5h7" stroke="#4a678f" />
            </svg>
            <Caret />
          </ScrollStep>
        </GalleryScroll>
      </StyleList>
      <ChangeStyles>
        <ChangeStylesIcon />
        <Fit w={36}>Change</Fit>
        <br />
        <Fit w={26}>Styles</Fit>
        <Caret />
      </ChangeStyles>
    </GroupBody>
    <GroupLabel>
      <span>
        <Fit w={26}>Styles</Fit>
      </span>
      <Launcher />
    </GroupLabel>
  </Group>
);

const EditingGroup = () => (
  <Group w={66}>
    <GroupBody>
      <Slot w={5} />
      <CommandList w={60}>
        <Command iconWidth={14}>
          <FindIcon />
          <Fit w={21}>Find</Fit>
          <Caret />
        </Command>
        <Command iconWidth={14}>
          <ReplaceIcon />
          <Fit w={36}>Replace</Fit>
        </Command>
        <Command iconWidth={14}>
          <PointerIcon />
          <Fit w={27}>Select</Fit>
          <Caret />
        </Command>
      </CommandList>
    </GroupBody>
    <GroupLabel plain>
      <span>
        <Fit w={33}>Editing</Fit>
      </span>
    </GroupLabel>
  </Group>
);

const Document = () => (
  <Page>
    <Paragraph>
      <Line>
        <Fit w={426}>I. Запетая при думи, които не са свързани</Fit>
        <Squiggle w={431} />
      </Line>
      <Line>
        <Fit w={296}>граматически с изречението.</Fit>
        <Squiggle w={296} />
      </Line>
    </Paragraph>
    <Paragraph>
      <Line>
        <Fit w={109}>{'Частиците '}</Fit>
        <Fit w={25.5} bold>да</Fit>
        <Fit w={24.5}>{' и '}</Fit>
        <Fit w={25} bold>не</Fit>
        <Fit w={274.5}>, употребени самостойно в</Fit>
      </Line>
      <Line>
        <Fit w={249}>{'изречението, частиците '}</Fit>
        <Fit w={12} bold>а</Fit>
        <Fit w={24}>{' и '}</Fit>
        <Fit w={50} bold>нали</Fit>
        <Fit w={78}>, когато</Fit>
      </Line>
      <Line>
        <Fit w={468}>изречението завършва с тях и междуметията.</Fit>
      </Line>
    </Paragraph>
    <Paragraph>
      <Line>
        <Fit w={102}>Примери:</Fit>
      </Line>
    </Paragraph>
    <Paragraph>
      <Line>
        <Fit w={30.5} bold>Ах,</Fit>
        <Fit w={224}>{' защо се получи така?'}</Fit>
      </Line>
    </Paragraph>
    <Paragraph>
      <Line>
        <Fit w={28.5} bold>Ех,</Fit>
        <Fit w={204.5}>{' защо не се получи?'}</Fit>
      </Line>
    </Paragraph>
    <Paragraph>
      <Line>
        <Fit w={33} bold>Не,</Fit>
        <Fit w={102}>{' не е така.'}</Fit>
      </Line>
    </Paragraph>
    <Paragraph>
      <Line>
        <Fit w={33.5} bold>Да,</Fit>
        <Fit w={71}>{' така е.'}</Fit>
      </Line>
    </Paragraph>
    <Paragraph>
      <Line>
        <Fit w={324}>{'Получи неговото предложение '}</Fit>
        <Fit w={51} bold>нали</Fit>
        <Fit w={11}>?</Fit>
        <TextCaret />
        <IBeam width="9" height="17" viewBox="0 0 9 17">
          <path d="M1.500 1.500h2l1 1 1-1h2M4.500 2v12M1.500 15.500h2l1-1 1 1h2" fill="none" stroke="#fff" strokeWidth="2.500" />
          <path d="M1.500 1.500h2l1 1 1-1h2M4.500 2v12M1.500 15.500h2l1-1 1 1h2" fill="none" stroke="#333" />
        </IBeam>
      </Line>
    </Paragraph>
    <Paragraph>
      <Line>
        <Fit w={152}>{'Какво мислиш '}</Fit>
        <Fit w={12} bold>а</Fit>
        <Fit w={10.5}>?</Fit>
      </Line>
    </Paragraph>
  </Page>
);

const VerticalScroll = () => (
  <ScrollBar>
    <SplitIcon />
    <ScrollTrack h={107}>
      <svg width="8" height="9" viewBox="0 0 8 9">
        <path d="M0 9l4-4 4 4z" fill="#4c5a72" />
      </svg>
    </ScrollTrack>
    <ScrollThumb>
      <svg width="7" height="7" viewBox="0 0 7 7">
        <path d="M0 .5h7M0 2.500h7M0 4.500h7M0 6.500h7" stroke="#6d747c" />
      </svg>
    </ScrollThumb>
    <ScrollTrack h={139}>
      <span />
      <svg width="8" height="9" viewBox="0 0 8 9">
        <path d="M0 0h8L4 4.500z" fill="#3f4d66" />
      </svg>
    </ScrollTrack>
    <BrowseButtons>
      <DoubleArrow />
      <svg width="8" height="8" viewBox="0 0 8 8">
        <circle cx="4" cy="4" r="3" fill="#b9bec6" stroke="#444b57" />
      </svg>
      <DoubleArrow down />
    </BrowseButtons>
  </ScrollBar>
);

const Status = () => (
  <StatusBar>
    <StatusCell w={66} pad={3.5}>
      <Fit w={54}>Page: 1 of 1</Fit>
    </StatusCell>
    <StatusCell w={64} pad={8} dim>
      <Fit w={47}>Words: 59</Fit>
    </StatusCell>
    <StatusCell w={148} pad={6}>
      <ProofIcon />
      <Slot w={15} />
      <Fit w={92}>Bulgarian (Bulgaria)</Fit>
    </StatusCell>
    <StatusCell w={617} pad={0} />
    <ViewButtons>
      {[0, 1, 2, 3, 4].map((kind) => (
        <ViewButton key={kind} on={kind === 0}>
          <ViewIcon kind={kind} />
        </ViewButton>
      ))}
    </ViewButtons>
    <ZoomRow>
      <Slot w={32}>
        <Fit w={25}>100%</Fit>
      </Slot>
      <ZoomSlider />
    </ZoomRow>
  </StatusBar>
);

const Tasks = () => (
  <TaskBar>
    <LaunchSlot w={42}>
      <StartOrb />
    </LaunchSlot>
    <LaunchSlot w={69}>
      <ExplorerIcon />
    </LaunchSlot>
    <LaunchSlot w={41}>
      <MediaIcon />
    </LaunchSlot>
    <LaunchSlot w={72}>
      <ChromeIcon />
    </LaunchSlot>
    <LaunchSlot w={40}>
      <HoneycombIcon />
    </LaunchSlot>
    <Slot w={9} />
    <TaskButton>
      <CamtasiaIcon />
    </TaskButton>
    <TaskButton active>
      <WordIcon />
    </TaskButton>
    <TaskButton>
      <CameraIcon />
    </TaskButton>
    <Tray>
      <Slot w={20} lift={5}>
        <Fit w={13}>BG</Fit>
      </Slot>
      <Slot w={20} lift={6}>
        <KeyboardIcon />
      </Slot>
      <Slot w={21} lift={5}>
        <HelpIcon dark />
      </Slot>
      <Slot w={18} lift={4}>
        <RestoreTrayIcon />
      </Slot>
      <Slot w={19}>
        <svg width="7" height="4" viewBox="0 0 7 4">
          <path d="M0 4l3.500-4L7 4z" fill="#fff" />
        </svg>
      </Slot>
      <Slot w={21}>
        <FlagIcon />
      </Slot>
      <Slot w={22}>
        <PowerIcon />
      </Slot>
      <Slot w={21}>
        <SignalIcon />
      </Slot>
      <Slot w={22}>
        <SpeakerIcon />
      </Slot>
      <Clock>
        <Fit w={25}>22:46</Fit>
        <br />
        <Fit w={53}>27.1.2015 г.</Fit>
      </Clock>
      <ShowDesktop />
    </Tray>
  </TaskBar>
);

const App = () => {
  return (
    <>
      <GlobalStyle />
      <Screen>
        <Desktop>
          <Header />
          <Ribbon>
            <ClipboardGroup />
            <FontGroup />
            <ParagraphGroup />
            <StylesGroup />
            <EditingGroup />
          </Ribbon>
          <RibbonFoot />
          <Workspace>
            <Document />
            <VerticalScroll />
          </Workspace>
          <Status />
          <Tasks />
        </Desktop>
      </Screen>
    </>
  );
};

export default App;
